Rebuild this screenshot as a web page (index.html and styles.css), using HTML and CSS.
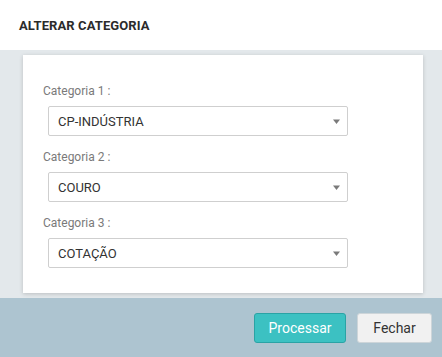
FILE: index.html
```html
<!DOCTYPE html>
<html lang="pt">
<head>
<meta charset="utf-8">
<title>Alterar Categoria</title>
<link rel="stylesheet" href="styles.css">
</head>
<body>
<div class="modal">
  <div class="modal-header">
    <h4 class="modal-title">ALTERAR CATEGORIA</h4>
  </div>
  <div class="modal-body">
    <div class="card">
      <div class="form-group">
        <label class="label">Categoria 1 :</label>
        <div class="select"><span class="value">CP-INDÚSTRIA</span><svg class="caret" width="7" height="5" viewBox="0 0 7 5"><path d="M0 0.5H7L3.5 5Z" fill="#7a7a7a"/></svg></div>
      </div>
      <div class="form-group">
        <label class="label">Categoria 2 :</label>
        <div class="select"><span class="value">COURO</span><svg class="caret" width="7" height="5" viewBox="0 0 7 5"><path d="M0 0.5H7L3.5 5Z" fill="#7a7a7a"/></svg></div>
      </div>
      <div class="form-group">
        <label class="label">Categoria 3 :</label>
        <div class="select"><span class="value">COTAÇÃO</span><svg class="caret" width="7" height="5" viewBox="0 0 7 5"><path d="M0 0.5H7L3.5 5Z" fill="#7a7a7a"/></svg></div>
      </div>
    </div>
  </div>
  <div class="modal-footer">
    <button class="btn btn-primary">Processar</button>
    <button class="btn btn-default">Fechar</button>
  </div>
</div>
</body>
</html>
```
FILE: styles.css
```css
html, body {
  margin: 0;
  padding: 0;
  background: #ffffff;
  font-family: Roboto, "Liberation Sans", Arial, sans-serif;
}
.modal {
  width: 442px;
  height: 357px;
  display: flex;
  flex-direction: column;
}
.modal-header {
  height: 50px;
  box-sizing: border-box;
  padding: 18px 19px 0;
  background: #ffffff;
}
.modal-title {
  margin: 0;
  font-size: 13px;
  line-height: 15px;
  font-weight: 700;
  color: #2b2b2b;
  letter-spacing: 0.1px;
}
.modal-body {
  height: 248px;
  box-sizing: border-box;
  padding: 5px 19px 0 23px;
  background: #e3e8eb;
}
.card {
  width: 400px;
  height: 238px;
  box-sizing: border-box;
  padding: 28px 0 0 20px;
  background: #ffffff;
  box-shadow: 0 1px 4px rgba(0, 0, 0, 0.18);
}
.form-group {
  margin-bottom: 13px;
}
.label {
  display: block;
  font-size: 12px;
  line-height: 17px;
  color: #7a7a7a;
  margin-bottom: 6px;
}
.select {
  width: 300px;
  height: 30px;
  box-sizing: border-box;
  margin-left: 5px;
  padding: 0 7px 0 9px;
  border: 1px solid #cfcfcf;
  border-radius: 2px;
  display: flex;
  align-items: center;
  justify-content: space-between;
  background: #ffffff;
}
.value {
  font-size: 13px;
  color: #333333;
}
.caret {
  display: block;
}
.modal-footer {
  flex: 1;
  background: #adc4d0;
  display: flex;
  justify-content: flex-end;
  align-items: flex-start;
  gap: 11px;
  padding: 15px 10px 0 0;
}
.btn {
  height: 30px;
  box-sizing: border-box;
  border-radius: 3px;
  font-family: Roboto, "Liberation Sans", Arial, sans-serif;
  font-size: 14px;
  padding: 0;
  cursor: pointer;
}
.btn-primary {
  width: 92px;
  background: #3cc1c2;
  border: 1px solid #2aa3a5;
  color: #ffffff;
}
.btn-default {
  width: 75px;
  background: #f1f1f1;
  border: 1px solid #cdd5d9;
  color: #333333;
}
```
